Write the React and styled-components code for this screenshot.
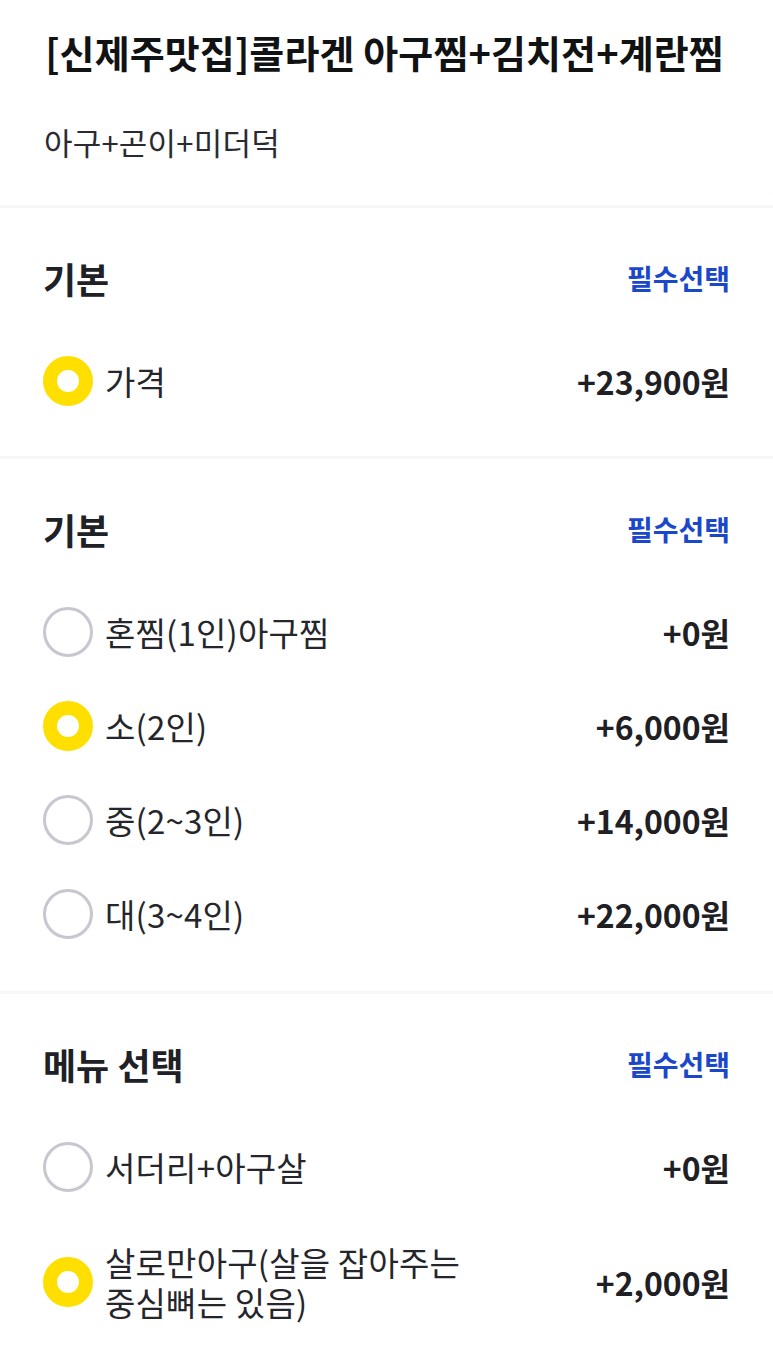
import React from "react";
import styled, { createGlobalStyle } from "styled-components";

const GlobalStyle = createGlobalStyle`
	* { box-sizing: border-box; }
	body {
		margin: 0;
		background: #ffffff;
		font-family: "Noto Sans CJK KR", "Noto Sans", sans-serif;
		color: #1f2024;
	}
`;

const Page = styled.div`
	width: 773px;
	background: #ffffff;
`;

const Top = styled.div`
	padding: 28px 44px 43px 40px;
`;

const Title = styled.h1`
	margin: 0;
	font-size: 38px;
	line-height: 48px;
	font-weight: 700;
	text-align: center;
	letter-spacing: 0.1px;
	white-space: nowrap;
	color: #111214;
`;

const Subtitle = styled.p`
	margin: 46px 0 0 4px;
	font-size: 31px;
	line-height: 40px;
	letter-spacing: 0.2px;
	color: #2a2b30;
`;

const Divider = styled.div`
	height: 3px;
	background: #f6f7f8;
`;

const Section = styled.section`
	padding: 48px 43px ${p => p.$bottom || 28}px 43px;
`;

const SectionHead = styled.div`
	display: flex;
	align-items: center;
	justify-content: space-between;
	height: 44px;
	margin-bottom: 34px;
`;

const SectionTitle = styled.h2`
	margin: 0;
	font-size: 36px;
	font-weight: 700;
	color: #202126;
`;

const Required = styled.span`
	font-size: 28px;
	font-weight: 700;
	color: #1b48c9;
`;

const Row = styled.label`
	display: flex;
	align-items: center;
	padding: ${p => (p.$tall ? 28 : 22)}px 0;
`;

const Radio = styled.span`
	flex: none;
	width: 50px;
	height: 50px;
	border-radius: 50%;
	border: ${p => (p.$checked ? "14.5px solid #ffdf00" : "3px solid #c6c7cf")};
	background: #ffffff;
	margin-right: 12px;
`;

const Label = styled.span`
	flex: 1;
	font-size: 33px;
	line-height: 40px;
	letter-spacing: 0.2px;
	word-break: keep-all;
	color: #25262b;
	max-width: 395px;
`;

const Price = styled.span`
	margin-left: auto;
	font-size: 32px;
	line-height: 40px;
	font-weight: 700;
	color: #1f2024;
`;

const sections = [
	{
		title: "기본",
		bottom: 28,
		items: [{ label: "가격", price: "+23,900원", checked: true }]
	},
	{
		title: "기본",
		bottom: 30,
		items: [
			{ label: "혼찜(1인)아구찜", price: "+0원" },
			{ label: "소(2인)", price: "+6,000원", checked: true },
			{ label: "중(2~3인)", price: "+14,000원" },
			{ label: "대(3~4인)", price: "+22,000원" }
		]
	},
	{
		title: "메뉴 선택",
		bottom: 30,
		items: [
			{ label: "서더리+아구살", price: "+0원" },
			{ label: "살로만아구(살을 잡아주는 중심뼈는 있음)", price: "+2,000원", checked: true, tall: true }
		]
	}
];

export default function App() {
	return (
		<Page>
			<GlobalStyle />
			<Top>
				<Title>[신제주맛집]콜라겐 아구찜+김치전+계란찜</Title>
				<Subtitle>아구+곤이+미더덕</Subtitle>
			</Top>
			{sections.map((s, i) => (
				<React.Fragment key={i}>
					<Divider />
					<Section $bottom={s.bottom}>
						<SectionHead>
							<SectionTitle>{s.title}</SectionTitle>
							<Required>필수선택</Required>
						</SectionHead>
						{s.items.map((it, j) => (
							<Row key={j} $tall={it.tall}>
								<Radio $checked={it.checked} />
								<Label>{it.label}</Label>
								<Price>{it.price}</Price>
							</Row>
						))}
					</Section>
				</React.Fragment>
			))}
		</Page>
	);
}
